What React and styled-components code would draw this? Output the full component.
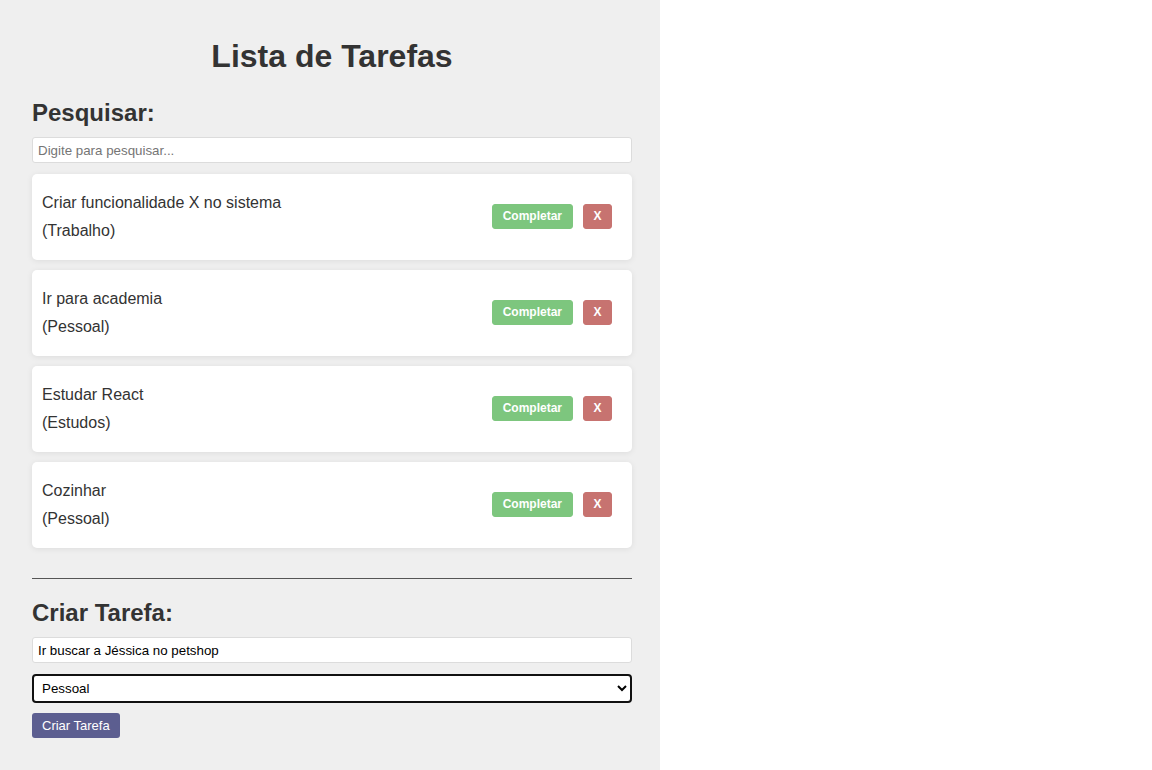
import React, { useState } from "react";
import styled, { createGlobalStyle } from "styled-components";

const Global = createGlobalStyle`
  html, body { margin: 0; padding: 0; background: #ffffff; }
  body { font-family: "Liberation Sans", Arial, sans-serif; color: #333; }
  * { box-sizing: border-box; }
`;

const Panel = styled.div`
  width: 660px;
  min-height: 100vh;
  background: #efefef;
  padding: 38px 28px 32px 32px;
  display: flex;
  flex-direction: column;
`;

const Title = styled.h1`
  margin: 0 0 24px;
  font-size: 32px;
  font-weight: bold;
  text-align: center;
  color: #333;
`;

const SectionTitle = styled.h2`
  margin: 0 0 10px;
  font-size: 24px;
  font-weight: bold;
  color: #333;
`;

const TextInput = styled.input`
  width: 100%;
  height: 26px;
  border: 1px solid #dcdcdc;
  border-radius: 3px;
  background: #fff;
  padding: 0 5px;
  font-family: "Liberation Sans", Arial, sans-serif;
  font-size: 13.333px;
  color: #000;
  margin-bottom: ${(p) => p.$mb || 0}px;
  outline: none;
  &::placeholder { color: #757575; }
`;

const List = styled.div`
  display: flex;
  flex-direction: column;
  gap: 10px;
`;

const Card = styled.div`
  background: #fff;
  border-radius: 5px;
  box-shadow: 0 1px 6px rgba(0, 0, 0, 0.08);
  padding: 15px 20px 15px 10px;
  display: flex;
  align-items: center;
  justify-content: space-between;
`;

const Info = styled.div`
  display: flex;
  flex-direction: column;
`;

const Line = styled.span`
  font-size: 16px;
  line-height: 28px;
  color: #333;
`;

const Actions = styled.div`
  display: flex;
  gap: 10px;
  padding-bottom: 2px;
`;

const SmallButton = styled.button`
  height: 25px;
  min-width: ${(p) => p.$minw || 0}px;
  padding: 0 ${(p) => p.$px}px;
  border: 1px solid ${(p) => p.$bg};
  background: ${(p) => p.$bg};
  color: #fff;
  font-family: "Liberation Sans", Arial, sans-serif;
  font-size: 12px;
  font-weight: bold;
  border-radius: 3px;
  cursor: pointer;
`;

const Divider = styled.hr`
  border: none;
  border-top: 1px solid #555;
  margin: 30px 0 20px;
  width: 100%;
`;

const Select = styled.select`
  width: 100%;
  height: 29px;
  border: 2px solid #111;
  border-radius: 4px;
  background: #fff;
  padding: 0 4px;
  font-family: "Liberation Sans", Arial, sans-serif;
  font-size: 13.333px;
  color: #000;
  margin-bottom: 10px;
  outline: none;
`;

const CreateButton = styled.button`
  align-self: flex-start;
  height: 25px;
  padding: 0 10px;
  border: none;
  border-radius: 3px;
  background: #5c5e90;
  color: #fff;
  font-family: "Liberation Sans", Arial, sans-serif;
  font-size: 13px;
  cursor: pointer;
`;

const tasks = [
  { title: "Criar funcionalidade X no sistema", category: "Trabalho" },
  { title: "Ir para academia", category: "Pessoal" },
  { title: "Estudar React", category: "Estudos" },
  { title: "Cozinhar", category: "Pessoal" },
];

export default function App() {
  const [search, setSearch] = useState("");
  const [text, setText] = useState("Ir buscar a Jéssica no petshop");
  const [cat, setCat] = useState("Pessoal");
  return (
    <>
      <Global />
      <Panel>
        <Title>Lista de Tarefas</Title>
        <SectionTitle>Pesquisar:</SectionTitle>
        <TextInput
          $mb={11}
          placeholder="Digite para pesquisar..."
          value={search}
          onChange={(e) => setSearch(e.target.value)}
        />
        <List>
          {tasks.map((t) => (
            <Card key={t.title}>
              <Info>
                <Line>{t.title}</Line>
                <Line>({t.category})</Line>
              </Info>
              <Actions>
                <SmallButton $bg="#7dc67e" $px={10}>Completar</SmallButton>
                <SmallButton $bg="#c77370" $px={9} $minw={29}>X</SmallButton>
              </Actions>
            </Card>
          ))}
        </List>
        <Divider />
        <SectionTitle>Criar Tarefa:</SectionTitle>
        <TextInput $mb={11} value={text} onChange={(e) => setText(e.target.value)} />
        <Select value={cat} onChange={(e) => setCat(e.target.value)}>
          <option>Selecione uma categoria</option>
          <option>Trabalho</option>
          <option>Pessoal</option>
          <option>Estudos</option>
        </Select>
        <CreateButton>Criar Tarefa</CreateButton>
      </Panel>
    </>
  );
}
